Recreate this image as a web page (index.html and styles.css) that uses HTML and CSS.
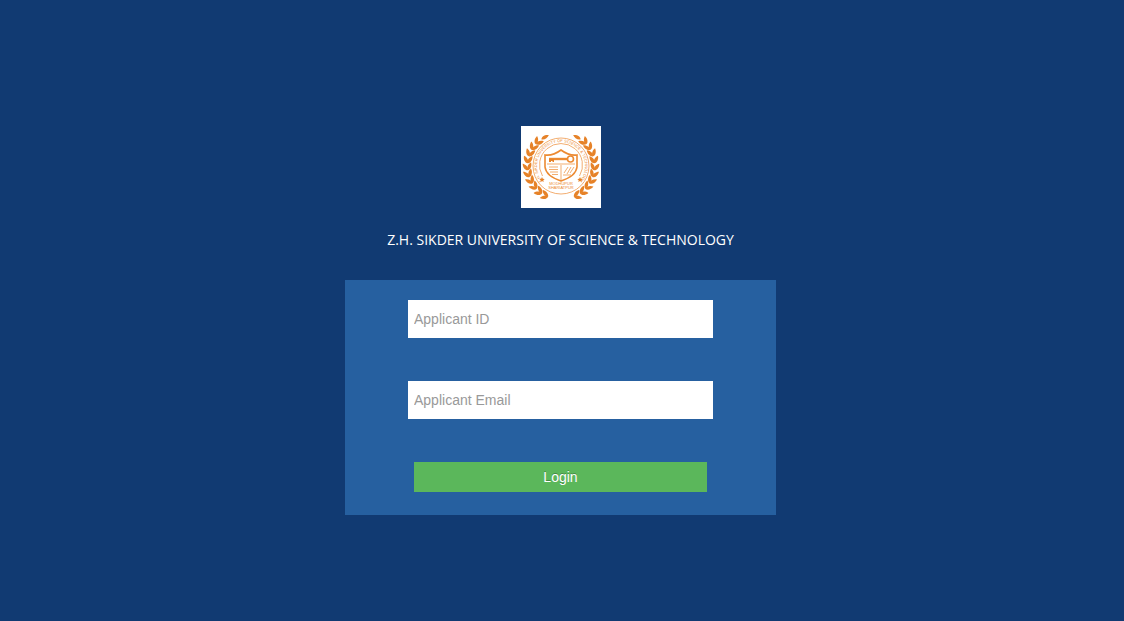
FILE: index.html
```html
<!DOCTYPE html>
<html lang="en">
<head>
<meta charset="utf-8">
<meta name="viewport" content="width=device-width, initial-scale=1">
<title>Applicant Login</title>
<link rel="stylesheet" href="styles.css">
</head>
<body>
<main class="login-page">
  <svg class="logo" viewBox="0 0 80 82" role="img" aria-label="University seal">
    <defs>
      <path id="leaf" d="M0 0C1-2.400 5-3 8.500-.6C6 1.700 2 2 0 0Z"/>
      <g id="pair">
        <use href="#leaf" transform="translate(-3 -33) rotate(-34)"/>
        <use href="#leaf" transform="translate(-3 -33) rotate(26)"/>
      </g>
      <g id="branch">
        <use href="#leaf" transform="rotate(-38) translate(1 -33) rotate(12)"/>
        <use href="#pair" transform="rotate(-44)"/>
        <use href="#pair" transform="rotate(-56)"/>
        <use href="#pair" transform="rotate(-68)"/>
        <use href="#pair" transform="rotate(-80)"/>
        <use href="#pair" transform="rotate(-92)"/>
        <use href="#pair" transform="rotate(-104)"/>
        <use href="#pair" transform="rotate(-116)"/>
        <use href="#pair" transform="rotate(-128)"/>
        <use href="#pair" transform="rotate(-140)"/>
        <use href="#pair" transform="rotate(-152)"/>
      </g>
      <path id="ring-text" d="M22 56A24 24 0 1 1 58 56"/>
    </defs>
    <rect class="logo-paper" width="80" height="82"/>
    <g class="logo-fill">
      <use href="#branch" transform="translate(40 40)"/>
      <use href="#branch" transform="translate(40 40) scale(-1 1)"/>
    </g>
    <g class="logo-line">
      <circle class="logo-paper" cx="40" cy="40" r="28"/>
      <path d="M21.500 50A21.500 21.500 0 1 1 58.500 50"/>
      <path class="logo-bold" d="M24 29Q32 30 40 24Q48 30 56 29V41Q55 50 40 55Q25 50 24 41Z"/>
      <path d="M26 38H54M40 39V54"/>
      <path d="M28 41H37M28 43.500H37M29 46H37M31 48.500H37M43 47L47 41M46 48L50 41M49 47L53 41M42 49H50"/>
      <circle class="logo-bold" cx="49.500" cy="33" r="3"/>
      <path class="logo-key" d="M46 33H28"/>
    </g>
    <path class="logo-fill" d="M28 33H33V36H31.500V35H30V36H28ZM21 51l.8 1.700 1.900.2-1.400 1.300.4 1.900-1.700-1-1.700 1 .4-1.900-1.400-1.300 1.900-.2ZM59 51l.8 1.700 1.900.2-1.400 1.300.4 1.900-1.700-1-1.700 1 .4-1.900-1.400-1.300 1.900-.2Z"/>
    <text class="logo-ring"><textPath href="#ring-text" startOffset="50%">Z.H. SIKDER UNIVERSITY OF SCIENCE &amp; TECHNOLOGY</textPath></text>
    <text class="logo-place" x="40" y="59">MODHUPUR</text>
    <text class="logo-place" x="40" y="63">SHARIATPUR</text>
  </svg>
  <h1 class="title">Z.H. SIKDER UNIVERSITY OF SCIENCE &amp; TECHNOLOGY</h1>
  <form class="card">
    <input class="field" type="text" name="applicant-id" aria-label="Applicant ID" placeholder="Applicant ID">
    <input class="field" type="email" name="applicant-email" aria-label="Applicant Email" placeholder="Applicant Email">
    <button class="submit" type="submit">Login</button>
  </form>
</main>
</body>
</html>
```
FILE: styles.css
```css
* {
  box-sizing: border-box;
}

body {
  margin: 0;
  background: #113a72;
  color: #fff;
  font-family: "Open Sans", sans-serif;
}

.login-page {
  display: flex;
  flex-direction: column;
  align-items: center;
  padding: 126px 3px 24px 0;
}

.logo {
  width: 80px;
  height: 82px;
}

.logo-paper {
  fill: #fff;
}

.logo-fill {
  fill: #e68228;
}

.logo-line {
  fill: none;
  stroke: #ec8a32;
  stroke-width: 0.7;
}

.logo-bold {
  stroke-width: 1.6;
}

.logo-key {
  stroke-width: 2.4;
}

.logo-ring,
.logo-place {
  fill: #ec8a32;
  font-family: "Liberation Sans", Arial, sans-serif;
  font-size: 4px;
  text-anchor: middle;
}

.title {
  margin: 22px 0 30px;
  font-size: 14px;
  font-weight: 400;
  line-height: 20px;
  text-align: center;
}

.card {
  display: flex;
  flex-direction: column;
  align-items: center;
  width: 100%;
  max-width: 431px;
  padding: 20px 63px 23px;
  background: #2660a0;
}

.field {
  width: 100%;
  height: 38px;
  margin: 0 0 43px;
  padding: 0 6px;
  border: 0;
  border-radius: 0;
  background: #fff;
  color: #555;
  font: 14px "Liberation Sans", Arial, sans-serif;
}

.field::placeholder {
  color: #999;
  opacity: 1;
}

.submit {
  width: calc(100% - 12px);
  height: 30px;
  padding: 0;
  border: 0;
  background: #5bb75b;
  color: #fff;
  font: 14px "Liberation Sans", Arial, sans-serif;
  text-shadow: 0 -1px 0 rgba(0, 0, 0, 0.25);
  cursor: pointer;
}
```
